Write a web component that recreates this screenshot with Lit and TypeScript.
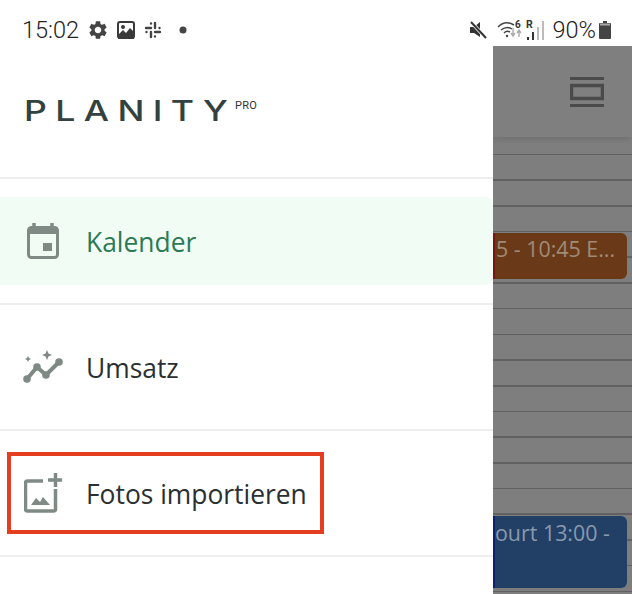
import { LitElement, html, css, svg } from "lit";
import { customElement } from "lit/decorators.js";

const gear = svg`<path d="M19.14 12.94c.04-.3.06-.61.06-.94 0-.32-.02-.64-.07-.94l2.03-1.58c.18-.14.23-.41.12-.61l-1.92-3.32c-.12-.22-.37-.29-.59-.22l-2.39.96c-.5-.38-1.03-.7-1.62-.94l-.36-2.54c-.04-.24-.24-.41-.48-.41h-3.84c-.24 0-.43.17-.47.41l-.36 2.54c-.59.24-1.13.57-1.62.94l-2.39-.96c-.22-.08-.47 0-.59.22L2.74 8.87c-.12.21-.08.47.12.61l2.03 1.58c-.05.3-.09.63-.09.94s.02.64.07.94l-2.03 1.58c-.18.14-.23.41-.12.61l1.92 3.32c.12.22.37.29.59.22l2.39-.96c.5.38 1.03.7 1.62.94l.36 2.54c.05.24.24.41.48.41h3.84c.24 0 .44-.17.47-.41l.36-2.54c.59-.24 1.13-.56 1.62-.94l2.39.96c.22.08.47 0 .59-.22l1.92-3.32c.12-.22.07-.47-.12-.61l-2.01-1.58zM12 15.6c-1.98 0-3.6-1.62-3.6-3.6s1.62-3.6 3.6-3.6 3.6 1.62 3.6 3.6-1.62 3.6-3.6 3.6z" fill="#444"/>`;

@customElement("app-root")
export class AppRoot extends LitElement {
  static styles = css`
    :host { display: block; width: 632px; height: 594px; overflow: hidden; background: #fff; position: relative; font-family: "Open Sans", sans-serif; }
    .status { height: 46px; display: flex; align-items: center; padding: 14px 21px 0 22px; box-sizing: border-box; font-family: Roboto, sans-serif; font-weight: 300; color: #222; font-size: 23.5px; }
    .status svg { display: block; flex: none; }
    .time { margin-right: 8px; }
    .spacer { flex: 1; }
    .i-img { margin-left: 8px; }
    .i-slack { margin-left: 9px; }
    .i-dot { margin-left: 17px; }
    .i-wifi { margin-left: 9px; }
    .i-sig { margin-left: 3px; }
    .pct { margin-left: 8px; }
    .i-bat { margin-left: 3px; }
    .main { display: flex; height: 548px; }
    .drawer { width: 493px; flex: none; background: #fff; }
    .brand { height: 131px; box-sizing: border-box; padding: 50px 0 0 24px; display: flex; align-items: flex-start; color: #33423e; }
    .word { font-family: Inter, sans-serif; font-weight: 500; font-size: 28.5px; line-height: 30px; letter-spacing: 6.7px; transform: scaleX(1.25); transform-origin: left center; width: 211px; white-space: nowrap; }
    .sup { font-family: Roboto, sans-serif; font-size: 11px; line-height: 12px; color: #333; margin-top: 4px; letter-spacing: 0.3px; }
    .section { height: 126px; box-sizing: border-box; border-top: 2px solid #eeeeee; padding: 18px 0; }
    .item { height: 88px; display: flex; align-items: center; font-size: 26.4px; color: #2a2f31; box-sizing: border-box; }
    .item.active { background: #f1fdf4; color: #2c7a55; border-radius: 0 8px 8px 0; }
    .label { padding-top: 2px; }
    .ico { width: 86px; flex: none; display: flex; }
    .ico svg { display: block; }
    .ic-cal { margin-left: 26px; }
    .ic-chart { margin-left: 22px; }
    .ic-photo { margin-left: 24px; }
    .panel { flex: 1; background: #7e7e7e; display: flex; flex-direction: column; position: relative; overflow: hidden; }
    .bar { height: 91px; flex: none; background: #7f7f7f; box-shadow: 0 2px 6px rgba(0,0,0,.12); display: flex; justify-content: flex-end; align-items: flex-start; padding: 31px 28px 0 0; box-sizing: border-box; position: relative; }
    .grid { flex: 1; background-image: repeating-linear-gradient(to bottom, transparent 0, transparent 16.6px, #616161 16.6px, #616161 18.2px, transparent 18.2px, transparent 25.7px); }
    .ev { position: absolute; left: 0; width: 134px; box-sizing: border-box; border-radius: 0 6px 6px 0; overflow: hidden; white-space: nowrap; font-size: 21.4px; line-height: 28px; padding: 2px 0 0 1px; }
    .ev1 { top: 187px; height: 46px; background: #6a3a18; color: #a08a78; border-left: 2px solid #7a1410; }
    .ev2 { top: 470px; height: 72px; background: #223f66; color: #8a99ad; border-left: 2px solid #0d1f70; padding: 3px 0 0 0; }
    .mark { position: absolute; left: 7px; top: 452px; width: 317px; height: 82px; box-sizing: border-box; border: 4px solid #e43d1f; }
  `;

  render() {
    return html`
      <div class="status">
        <span class="time">15:02</span>
        <svg width="22" height="22" viewBox="0 0 24 24">${gear}</svg>
        <svg class="i-img" width="18" height="18" viewBox="0 0 18 18"><rect x="1" y="1" width="16" height="16" rx="2" fill="#fff" stroke="#3a3a3a" stroke-width="2"/><path d="M1 14l5-5 3 3 4-5 4 4v8H1z" fill="#3a3a3a"/><circle cx="6" cy="6" r="2" fill="#3a3a3a"/></svg>
        <svg class="i-slack" width="18" height="18" viewBox="0 0 18 18" fill="none" stroke="#444" stroke-width="2.4" stroke-linecap="round"><path d="M2 7h5M7 2.500v.01M11 2v5M15.500 7h.01M11 11h5M11 15.500v.01M7 11v5M2.500 11h.01"/></svg>
        <svg class="i-dot" width="8" height="8" viewBox="0 0 8 8"><circle cx="4" cy="4" r="3.500" fill="#444"/></svg>
        <span class="spacer"></span>
        <svg width="18" height="18" viewBox="0 0 18 18"><path d="M0 6h4l6-5v15l-6-4H0z" fill="#333"/><path d="M1 1l15 16" stroke="#fff" stroke-width="3.500"/><path d="M1 1l15 16" stroke="#333" stroke-width="2"/></svg>
        <svg class="i-wifi" width="26" height="22" viewBox="0 0 26 22" fill="none" stroke="#444" stroke-width="1.500"><path d="M1 8c5-5 11-5 16-2M4 11c4-3 8-3 11-1M7 14c2-2 4-2 6-1"/><circle cx="10" cy="17" r="1.200" fill="#444" stroke="none"/><path d="M16 9v7M14 14l2 3 2-3" stroke="#aaa" stroke-width="1.400"/><path d="M22 18v-6M20 14l2-3 2 3" stroke="#aaa" stroke-width="1.400"/><text x="18" y="9" font-family="Roboto, sans-serif" font-weight="700" font-size="10" fill="#333" stroke="none">6</text></svg>
        <svg class="i-sig" width="19" height="22" viewBox="0 0 19 22"><text x="0" y="9" font-family="Roboto, sans-serif" font-weight="700" font-size="10.500" fill="#333">R</text><rect x="1" y="18" width="2" height="3" fill="#333"/><rect x="6" y="13" width="2" height="8" fill="#333"/><rect x="11" y="8" width="2" height="13" fill="#bbb"/><rect x="16" y="2" width="2" height="19" fill="#bbb"/></svg>
        <span class="pct">90%</span>
        <svg class="i-bat" width="12" height="18" viewBox="0 0 12 18"><path d="M4 0h4v2h3a1 1 0 0 1 1 1v14a1 1 0 0 1-1 1H1a1 1 0 0 1-1-1V3a1 1 0 0 1 1-1h3z" fill="#444"/><rect x="1" y="2.500" width="10" height="2" fill="#aaa"/></svg>
      </div>
      <div class="main">
        <nav class="drawer">
          <div class="brand"><span class="word">PLANITY</span><span class="sup">PRO</span></div>
          <div class="section">
            <div class="item active">
              <span class="ico"><svg class="ic-cal" width="34" height="38" viewBox="0 0 34 38"><path d="M8 1v6M26 1v6" stroke="#7f8a85" stroke-width="3.500"/><rect x="2.500" y="5.500" width="29" height="30" rx="3" fill="none" stroke="#7f8a85" stroke-width="3"/><rect x="2" y="5" width="30" height="7" rx="2" fill="#7f8a85"/><rect x="17" y="21" width="9" height="8" fill="#7f8a85"/></svg></span>
              <span class="label">Kalender</span>
            </div>
          </div>
          <div class="section">
            <div class="item">
              <span class="ico"><svg class="ic-chart" width="42" height="34" viewBox="0 0 42 34"><path d="M5 29l10-12 9 8 13-13" fill="none" stroke="#7f8a85" stroke-width="4"/><circle cx="5" cy="29" r="3.800" fill="#7f8a85"/><circle cx="15" cy="17" r="3.800" fill="#7f8a85"/><circle cx="24" cy="25" r="3.800" fill="#7f8a85"/><circle cx="37" cy="12" r="3.800" fill="#7f8a85"/><path d="M25 0l1.500 3.500L30 5l-3.500 1.500L25 10l-1.500-3.500L20 5l3.500-1.500z" fill="#7f8a85"/><path d="M6 6l1 2 2 1-2 1-1 2-1-2-2-1 2-1z" fill="#7f8a85"/></svg></span>
              <span class="label">Umsatz</span>
            </div>
          </div>
          <div class="section">
            <div class="item">
              <span class="ico"><svg class="ic-photo" width="38" height="40" viewBox="0 0 38 40"><path d="M19 8H3.500a2 2 0 0 0-2 2v26a2 2 0 0 0 2 2h26a2 2 0 0 0 2-2V16" fill="none" stroke="#7f8a85" stroke-width="3.500"/><path d="M31.500 0v14M24 7h14" stroke="#7f8a85" stroke-width="3.500"/><path d="M7 32l5-7 4 4 3-5 7 8z" fill="#7f8a85"/></svg></span>
              <span class="label">Fotos importieren</span>
            </div>
          </div>
          <div class="section"></div>
        </nav>
        <div class="panel">
          <div class="bar"><svg width="34" height="30" viewBox="0 0 34 30"><path d="M0 1.500h34M0 28.500h34" stroke="#4a4a4a" stroke-width="3"/><rect x="1.500" y="8.500" width="31" height="13" fill="none" stroke="#4a4a4a" stroke-width="3.500"/></svg></div>
          <div class="grid"></div>
          <div class="ev ev1">5 - 10:45 E...</div>
          <div class="ev ev2">ourt 13:00 -</div>
        </div>
      </div>
      <div class="mark"></div>
    `;
  }
}
